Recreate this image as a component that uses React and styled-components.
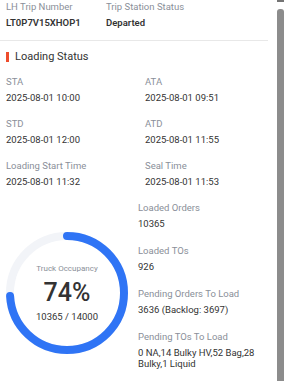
import styled, { createGlobalStyle } from "styled-components";

const GlobalStyle = createGlobalStyle`
  html, body {
    margin: 0;
    padding: 0;
    background: #ffffff;
  }
  body {
    font-family: Roboto, "Liberation Sans", sans-serif;
  }
`;

const RADIUS = 57;
const CIRC = 2 * Math.PI * RADIUS;

const Field = ({ label, value, bold }) => (
  <Item>
    <Label>{label}</Label>
    <Value $bold={bold}>{value}</Value>
  </Item>
);

const Occupancy = ({ percent, loaded, total }) => (
  <Ring>
    <svg width="122" height="122" viewBox="0 0 122 122">
      <circle cx="61" cy="61" r={RADIUS} fill="none" stroke="#f2f4f8" strokeWidth="8" />
      <circle
        cx="61"
        cy="61"
        r={RADIUS}
        fill="none"
        stroke="#2f74f5"
        strokeWidth="8"
        strokeLinecap="round"
        strokeDasharray={`${(CIRC * percent) / 100} ${CIRC}`}
        transform="rotate(-90 61 61)"
      />
    </svg>
    <RingText>
      <RingTitle>Truck Occupancy</RingTitle>
      <RingPercent>{percent}%</RingPercent>
      <RingCount>
        {loaded} / {total}
      </RingCount>
    </RingText>
  </Ring>
);

const App = () => {
  return (
    <>
      <GlobalStyle />
      <Panel>
        <Content>
          <TopRow>
            <Field label="LH Trip Number" value="LT0P7V15XHOP1" bold />
            <Field label="Trip Station Status" value="Departed" bold />
          </TopRow>
          <Divider />
          <SectionTitle>Loading Status</SectionTitle>
          <Grid>
            <Field label="STA" value="2025-08-01 10:00" />
            <Field label="ATA" value="2025-08-01 09:51" />
            <Field label="STD" value="2025-08-01 12:00" />
            <Field label="ATD" value="2025-08-01 11:55" />
            <Field label="Loading Start Time" value="2025-08-01 11:32" />
            <Field label="Seal Time" value="2025-08-01 11:53" />
          </Grid>
          <Bottom>
            <Occupancy percent={74} loaded={10365} total={14000} />
            <Stats>
              <Field label="Loaded Orders" value="10365" />
              <Field label="Loaded TOs" value="926" />
              <Field label="Pending Orders To Load" value="3636 (Backlog: 3697)" />
              <Field label="Pending TOs To Load" value="0 NA,14 Bulky HV,52 Bag,28 Bulky,1 Liquid" />
            </Stats>
          </Bottom>
        </Content>
        <ScrollTrack>
          <ScrollCap />
          <ScrollThumb />
        </ScrollTrack>
      </Panel>
    </>
  );
};

export default App;

const Panel = styled.div`
  display: flex;
  width: 284px;
  height: 381px;
  overflow: hidden;
  background: #fff;
`;

const Content = styled.div`
  flex: 1;
  padding: 1px 15px 0 6px;
  color: #333;
`;

const ScrollTrack = styled.div`
  width: 7px;
  display: flex;
  flex-direction: column;
`;

const ScrollCap = styled.div`
  height: 2px;
  background: #747474;
  margin-bottom: 7px;
`;

const ScrollThumb = styled.div`
  flex: 1;
  background: #8c8c8c;
  border-radius: 3px 3px 0 0;
`;

const TopRow = styled.div`
  display: grid;
  grid-template-columns: 100px 1fr;
`;

const Item = styled.div`
  display: flex;
  flex-direction: column;
  gap: 5px;
`;

const Label = styled.div`
  font-size: 9.5px;
  line-height: 11px;
  color: #8a8f99;
`;

const Value = styled.div`
  font-size: 9.5px;
  line-height: 11px;
  color: #333;
  font-weight: ${(p) => (p.$bold ? 600 : 400)};
`;

const Divider = styled.div`
  height: 1px;
  background: #e8e8e8;
  margin: 12px -6px 0 -6px;
`;

const SectionTitle = styled.div`
  display: flex;
  align-items: center;
  gap: 6px;
  margin-top: 9px;
  font-size: 11px;
  line-height: 14px;
  color: #333;

  &::before {
    content: "";
    width: 3px;
    height: 10px;
    background: #ee4d2d;
  }
`;

const Grid = styled.div`
  display: grid;
  grid-template-columns: 139px 1fr;
  row-gap: 15px;
  margin-top: 12px;
`;

const Bottom = styled.div`
  display: flex;
  align-items: flex-start;
  gap: 10px;
  margin-top: 15px;
`;

const Ring = styled.div`
  position: relative;
  width: 122px;
  height: 122px;
  margin-top: 30px;
  flex-shrink: 0;
`;

const RingText = styled.div`
  position: absolute;
  inset: 0;
  display: flex;
  flex-direction: column;
  align-items: center;
  justify-content: center;
`;

const RingTitle = styled.div`
  font-size: 8px;
  line-height: 12px;
  color: #8a8f99;
`;

const RingPercent = styled.div`
  font-size: 25px;
  font-weight: 500;
  color: #333;
  line-height: 36px;
`;

const RingCount = styled.div`
  font-size: 9.5px;
  line-height: 12px;
  color: #333;
`;

const Stats = styled.div`
  display: flex;
  flex-direction: column;
  gap: 16px;
`;
